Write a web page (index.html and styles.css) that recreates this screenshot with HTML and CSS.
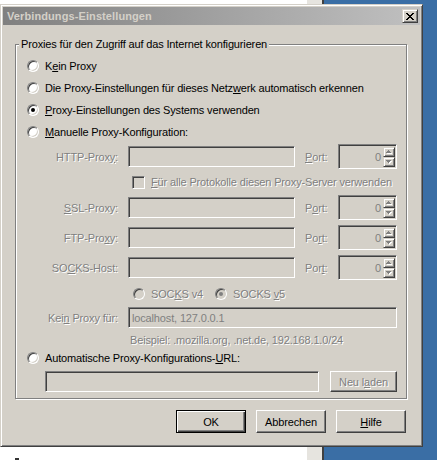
FILE: index.html
```html
<!DOCTYPE html>
<html lang="de">
<head>
  <meta charset="UTF-8" />
  <meta name="viewport" content="width=device-width, initial-scale=1.0"/>
  <title>Verbindungs-Einstellungen</title>
  <link rel="stylesheet" href="styles.css">
</head>
<body>
  <!-- kleine Pfeile fuer die Spin-Buttons -->
  <svg class="defs" width="0" height="0">
    <defs>
      <g id="arrow-up">
        <path d="M3 1h1v1H3zM2 2h3v1H2zM1 3h5v1H1z" fill="#fff"/>
        <path d="M2 0h1v1H2zM1 1h3v1H1zM0 2h5v1H0z" fill="#808080"/>
      </g>
      <g id="arrow-down">
        <path d="M1 1h5v1H1zM2 2h3v1H2zM3 3h1v1H3z" fill="#fff"/>
        <path d="M0 0h5v1H0zM1 1h3v1H1zM2 2h1v1H2z" fill="#808080"/>
      </g>
    </defs>
  </svg>

  <div class="dialog" role="dialog">
    <div class="titlebar">
      <span class="title">Verbindungs-Einstellungen</span>
      <span class="close-btn">
        <svg width="8" height="7" viewBox="0 0 8 7" shape-rendering="crispEdges">
          <path d="M0 0h2v1H0zM6 0h2v1H6zM1 1h2v1H1zM5 1h2v1H5zM2 2h4v1H2zM3 3h2v1H3zM2 4h4v1H2zM1 5h2v1H1zM5 5h2v1H5zM0 6h2v1H0zM6 6h2v1H6z" fill="#000"/>
        </svg>
      </span>
    </div>

    <div class="content">
      <div class="group">
        <div class="legend">Proxies für den Zugriff auf das Internet konfigurieren</div>

        <div class="option"><span class="radio"></span><span>K<u>e</u>in Proxy</span></div>
        <div class="option"><span class="radio"></span><span>Die Proxy-Einstellungen für dieses Netz<u>w</u>erk automatisch erkennen</span></div>
        <div class="option"><span class="radio checked"></span><span><u>P</u>roxy-Einstellungen des Systems verwenden</span></div>
        <div class="option"><span class="radio"></span><span><u>M</u>anuelle Proxy-Konfiguration:</span></div>

        <div class="manual">
          <span class="label off">HTTP-Prox<u>y</u>:</span>
          <span class="field"></span>
          <span class="port off"><u>P</u>ort:</span>
          <span class="spin">
            <span class="spin-val">0</span>
            <span class="spin-btns">
              <span class="spin-btn"><svg width="6" height="4"><use href="#arrow-up"/></svg></span>
              <span class="spin-btn"><svg width="6" height="4"><use href="#arrow-down"/></svg></span>
            </span>
          </span>

          <div class="share off"><span class="checkbox"></span><span><u>F</u>ür alle Protokolle diesen Proxy-Server verwenden</span></div>

          <span class="label off"><u>S</u>SL-Proxy:</span>
          <span class="field"></span>
          <span class="port off">P<u>o</u>rt:</span>
          <span class="spin">
            <span class="spin-val">0</span>
            <span class="spin-btns">
              <span class="spin-btn"><svg width="6" height="4"><use href="#arrow-up"/></svg></span>
              <span class="spin-btn"><svg width="6" height="4"><use href="#arrow-down"/></svg></span>
            </span>
          </span>

          <span class="label off">FTP-Pro<u>x</u>y:</span>
          <span class="field"></span>
          <span class="port off">Po<u>r</u>t:</span>
          <span class="spin">
            <span class="spin-val">0</span>
            <span class="spin-btns">
              <span class="spin-btn"><svg width="6" height="4"><use href="#arrow-up"/></svg></span>
              <span class="spin-btn"><svg width="6" height="4"><use href="#arrow-down"/></svg></span>
            </span>
          </span>

          <span class="label off">SO<u>C</u>KS-Host:</span>
          <span class="field"></span>
          <span class="port off">Por<u>t</u>:</span>
          <span class="spin">
            <span class="spin-val">0</span>
            <span class="spin-btns">
              <span class="spin-btn"><svg width="6" height="4"><use href="#arrow-up"/></svg></span>
              <span class="spin-btn"><svg width="6" height="4"><use href="#arrow-down"/></svg></span>
            </span>
          </span>

          <div class="socks off">
            <span class="socks-opt"><span class="radio off"></span><span>SOC<u>K</u>S v4</span></span>
            <span class="socks-opt"><span class="radio off checked"></span><span>SOCKS <u>v</u>5</span></span>
          </div>

          <span class="label off">Kei<u>n</u> Proxy für:</span>
          <span class="field wide">localhost, 127.0.0.1</span>

          <div class="hint off">Beispiel: .mozilla.org, .net.de, 192.168.1.0/24</div>
        </div>

        <div class="option"><span class="radio"></span><span>Automatische Proxy-Konfigurations-<u>U</u>RL:</span></div>
        <div class="url-row">
          <span class="field url"></span>
          <span class="btn small off"><span>Neu l<u>a</u>den</span></span>
        </div>
      </div>

      <div class="buttons">
        <span class="btn default">OK</span>
        <span class="btn">Abbrechen</span>
        <span class="btn"><span><u>H</u>ilfe</span></span>
      </div>
    </div>
  </div>

  <div class="mark"></div>
</body>
</html>
```

FILE: styles.css
```css
* {
  box-sizing: border-box;
}

html, body {
  margin: 0;
}

body {
  height: 460px;
  overflow: hidden;
  font-family: "Liberation Sans", Arial, sans-serif;
  font-size: 11px;
  letter-spacing: -0.15px;
  color: #000;
  background: linear-gradient(to right, #fff 0 307px, #e6e4df 307px 322px, #404040 322px 324px, #3a6ea5 324px);
}

.defs {
  position: absolute;
}

u {
  text-decoration: underline;
  text-underline-offset: 1px;
}

.dialog {
  margin-top: 4px;
  width: 423px;
  height: 443px;
  padding: 2px;
  display: flex;
  flex-direction: column;
  background: #d4d0c8;
  border: 1px solid;
  border-color: #d4d0c8 #404040 #404040 #d4d0c8;
  box-shadow: inset 1px 1px #fff, inset -1px -1px #808080;
}

/* Titelleiste (inaktives Fenster) */
.titlebar {
  height: 18px;
  flex: none;
  display: flex;
  align-items: center;
  justify-content: space-between;
  padding: 0 2px 0 4px;
  background: linear-gradient(to right, #808080, #c0c0c0);
  color: #d4d0c8;
  font-weight: bold;
  letter-spacing: 0.1px;
}

.close-btn {
  width: 16px;
  height: 14px;
  display: flex;
  align-items: center;
  justify-content: center;
  background: #d4d0c8;
  border: 1px solid;
  border-color: #d4d0c8 #404040 #404040 #d4d0c8;
  box-shadow: inset 1px 1px #fff, inset -1px -1px #808080;
}

.content {
  flex: 1;
  display: flex;
  flex-direction: column;
  padding: 19px 13px 0 12px;
}

/* Gruppenrahmen mit eingeprägter Linie */
.group {
  display: flex;
  flex-direction: column;
  padding: 0 0 6px 11px;
  border: 1px solid #808080;
  box-shadow: inset 1px 1px #fff, 1px 1px #fff;
}

.legend {
  align-self: flex-start;
  margin: -7px 0 4px -8px;
  padding: 0 2px;
  line-height: 13px;
  background: #d4d0c8;
}

.option {
  height: 22px;
  display: flex;
  align-items: center;
  white-space: nowrap;
}

.radio {
  flex: none;
  width: 12px;
  height: 12px;
  margin-right: 6px;
  display: flex;
  align-items: center;
  justify-content: center;
  border-radius: 50%;
  background: #fff;
  border: 1px solid;
  border-color: #808080 #fff #fff #808080;
  box-shadow: inset 1px 1px #404040, inset -1px -1px #d4d0c8;
}

.radio.checked::after {
  content: "";
  width: 4px;
  height: 4px;
  border-radius: 50%;
  background: #000;
}

.radio.off {
  background: #d4d0c8;
}

.radio.off.checked::after {
  background: #808080;
}

.off {
  color: #808080;
  text-shadow: 1px 1px 0 #fff;
}

/* manuelle Konfiguration */
.manual {
  display: grid;
  grid-template-columns: 91px 167px 23px 59px;
  grid-template-rows: 25px 16px 25px 25px 25px 17px 21px 14px;
  column-gap: 10px;
  row-gap: 5px;
  align-items: center;
  margin-top: 1px;
}

.label {
  text-align: right;
  white-space: nowrap;
}

.port {
  white-space: nowrap;
}

.field {
  height: 21px;
  display: flex;
  align-items: center;
  padding: 0 3px;
  color: #808080;
  white-space: nowrap;
  background: #d4d0c8;
  border: 1px solid;
  border-color: #808080 #fff #fff #808080;
  box-shadow: inset 1px 1px #404040, inset -1px -1px #d4d0c8;
}

.field.wide {
  grid-column: 2 / -1;
}

.spin {
  height: 25px;
  display: flex;
  padding: 1px;
  background: #d4d0c8;
  border: 1px solid;
  border-color: #808080 #fff #fff #808080;
  box-shadow: inset 1px 1px #404040, inset -1px -1px #d4d0c8;
}

.spin-val {
  flex: 1;
  align-self: center;
  text-align: right;
  padding-right: 2px;
  color: #808080;
}

.spin-btns {
  width: 12px;
  margin: 1px 0 0;
  display: flex;
  flex-direction: column;
}

.spin-btn {
  flex: 1;
  display: flex;
  align-items: center;
  justify-content: center;
  background: #d4d0c8;
  border: 1px solid;
  border-color: #d4d0c8 #404040 #404040 #d4d0c8;
  box-shadow: inset 1px 1px #fff, inset -1px -1px #808080;
}

.share {
  grid-column: 2 / -1;
  display: flex;
  align-items: center;
  padding-left: 4px;
  white-space: nowrap;
}

.checkbox {
  flex: none;
  width: 13px;
  height: 13px;
  margin-right: 6px;
  background: #d4d0c8;
  border: 1px solid;
  border-color: #808080 #fff #fff #808080;
  box-shadow: inset 1px 1px #404040, inset -1px -1px #d4d0c8;
}

.socks {
  grid-column: 2 / -1;
  display: flex;
  align-items: center;
  padding-left: 5px;
}

.socks-opt {
  display: flex;
  align-items: center;
  white-space: nowrap;
}

.socks-opt:first-child {
  width: 82px;
}

.hint {
  grid-column: 2 / -1;
  padding-left: 2px;
  white-space: nowrap;
}

.url-row {
  display: flex;
  gap: 11px;
  margin: 2px 0 0 18px;
}

.field.url {
  width: 274px;
}

/* Schaltflächen */
.buttons {
  display: flex;
  justify-content: flex-end;
  gap: 10px;
  margin-top: 11px;
  padding-right: 1px;
}

.btn {
  width: 70px;
  height: 23px;
  display: flex;
  align-items: center;
  justify-content: center;
  background: #d4d0c8;
  border: 1px solid;
  border-color: #fff #404040 #404040 #fff;
  box-shadow: inset -1px -1px #808080;
  white-space: nowrap;
}

.btn.default {
  border-color: #000;
  box-shadow: inset 1px 1px #fff, inset -1px -1px #404040, inset -2px -2px #808080;
}

.btn.small {
  width: 67px;
  height: 21px;
}

.mark {
  width: 4px;
  height: 2px;
  margin: 11px 0 0 15px;
  background: #333;
}
```
